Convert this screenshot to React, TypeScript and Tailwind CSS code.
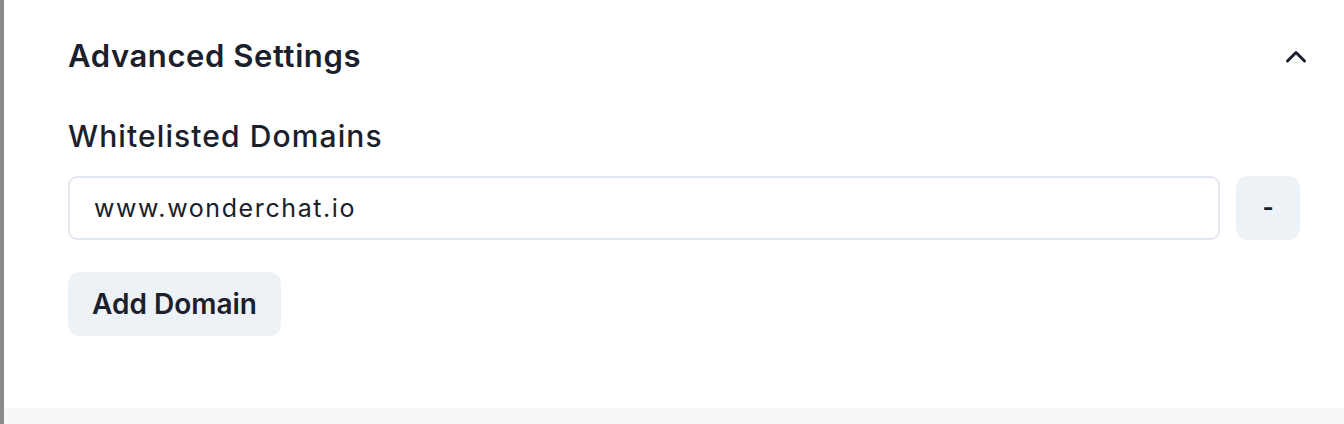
import { useState } from "react";

const AdvancedSettings = () => {
  const [domains, setDomains] = useState<string[]>(["www.wonderchat.io"]);
  const [open, setOpen] = useState(true);

  const updateDomain = (index: number, value: string) => {
    setDomains((prev) => prev.map((d, i) => (i === index ? value : d)));
  };

  return (
    <div className="flex h-[424px] w-full flex-col border-l-4 border-[#8b8b8b] bg-white font-['Inter',sans-serif] text-[#1a202c]">
      <div className="flex-1 pl-[64px] pr-[44px] pt-[38px]">
        {/* Header */}
        <div className="flex items-center justify-between">
          <h2 className="text-[31px] leading-[36px] font-semibold tracking-[0.6px]">Advanced Settings</h2>
          <button
            type="button"
            onClick={() => setOpen(!open)}
            className="-mr-[6px] flex h-[20px] w-[20px] items-center justify-center"
          >
            <svg width="20" height="13" viewBox="0 0 20 13" fill="none">
              <polyline
                points={open ? "1.5,11 10,2.5 18.5,11" : "1.5,2 10,10.5 18.5,2"}
                stroke="#1a202c"
                strokeWidth="3"
                strokeLinecap="round"
                strokeLinejoin="round"
              />
            </svg>
          </button>
        </div>

        {open && (
          <>
            {/* Whitelisted domains */}
            <div className="mt-[42px] text-[30px] leading-[40px] font-medium tracking-[1.1px]">Whitelisted Domains</div>

            <div className="mt-[20px] flex flex-col gap-4">
              {domains.map((domain, i) => (
                <div key={i} className="flex gap-4">
                  <input
                    value={domain}
                    onChange={(e) => updateDomain(i, e.target.value)}
                    className="h-[64px] flex-1 rounded-[9px] border-2 border-[#e2e8f0] px-[24px] text-[25px] tracking-[1.6px] text-[#1a202c] outline-none"
                  />
                  <button
                    type="button"
                    onClick={() => setDomains((prev) => prev.filter((_, j) => j !== i))}
                    className="h-[64px] w-[64px] rounded-[12px] bg-[#edf2f7] text-[24px] font-bold"
                  >
                    -
                  </button>
                </div>
              ))}
            </div>

            <button
              type="button"
              onClick={() => setDomains((prev) => [...prev, ""])}
              className="mt-[32px] h-[64px] rounded-[12px] bg-[#edf2f7] px-[24px] text-[28px] font-semibold"
            >
              Add Domain
            </button>
          </>
        )}
      </div>
      <div className="h-[16px] bg-[#f7f8fa]" />
    </div>
  );
};

export default function App() {
  return <AdvancedSettings />;
}
